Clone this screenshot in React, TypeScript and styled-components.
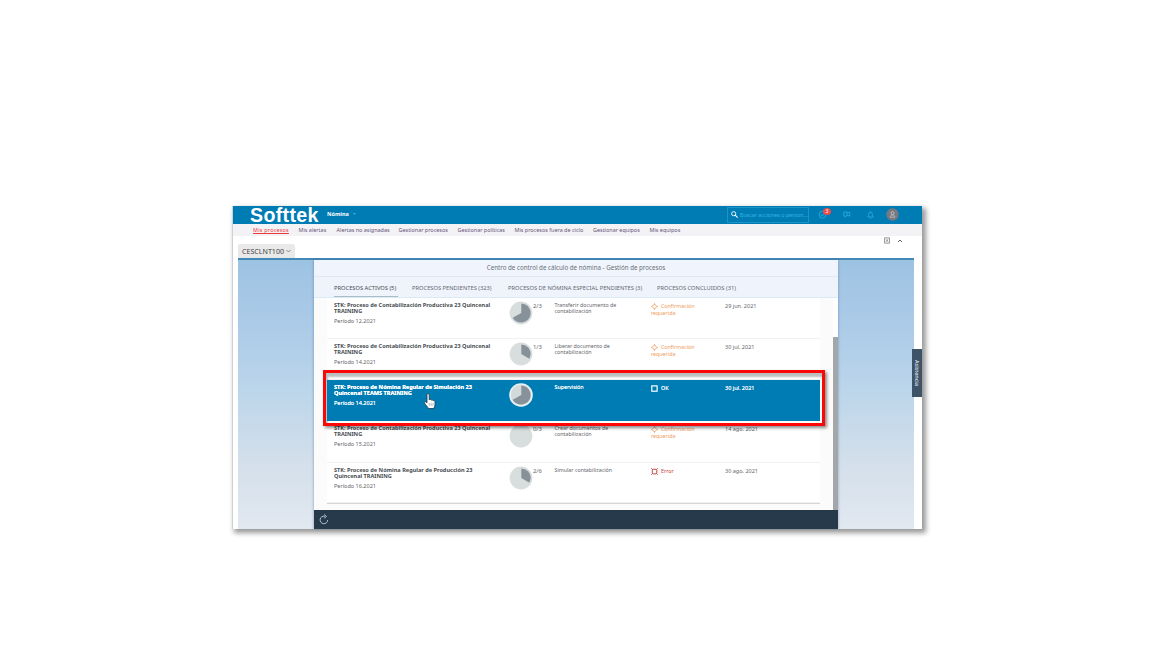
import React from "react";
import styled, { createGlobalStyle, css } from "styled-components";

const Global = createGlobalStyle`
  * { box-sizing: border-box; }
  html, body { margin: 0; background: #fff; }
  body { font-family: "Noto Sans", "Open Sans", sans-serif; }
`;

const Page = styled.main`
  height: 648px;
  padding: 206px 0 0 232px;
  overflow: hidden;
`;
const Window = styled.section`
  position: relative;
  width: 690px;
  height: 323px;
  background: #fff;
  border-left: 1px solid #cdd1d5;
  box-shadow: 3px 3px 5px 1px rgba(0, 0, 0, 0.4);
`;
const Header = styled.header`
  height: 18px;
  display: flex;
  align-items: center;
  padding-left: 17px;
  background: #007cb5;
  color: #fff;
`;
const Logo = styled.div`
  width: 77px;
  height: 22px;
  margin-top: -1px;
  font: bold 19.6px/22px "Liberation Sans", sans-serif;
  letter-spacing: 0.35px;
  white-space: nowrap;
`;
const Module = styled.div`
  width: 400px;
  display: flex;
  align-items: center;
  gap: 4px;
  font-size: 5.5px;
  font-weight: 700;
  line-height: 8px;
  margin-top: -2px;
`;
const Search = styled.div`
  width: 82px;
  height: 16px;
  display: flex;
  align-items: center;
  gap: 2px;
  padding: 0 0 1px 3px;
  border: 1px solid #1e93c6;
  color: #35b5e4;
  font-size: 5.3px;
  white-space: nowrap;
`;
const HeadIcons = styled.div`
  display: flex;
  align-items: center;
  margin-left: 9px;
  margin-top: -1px;
  color: #27b1e2;
`;
const IconCell = styled.div<{ $w: number }>`
  position: relative;
  width: ${(p) => p.$w}px;
  height: 16px;
  display: flex;
  align-items: center;
  svg { display: block; }
`;
const Badge = styled.span`
  position: absolute;
  left: 5px;
  top: 1px;
  width: 8px;
  height: 7px;
  border-radius: 50%;
  background: #ee4b4b;
  color: #fff;
  font-size: 5px;
  line-height: 7px;
  text-align: center;
`;
const Nav = styled.nav`
  height: 12px;
  display: flex;
  padding: 2px 0 0 20px;
  background: #f3f2f4;
`;
const NavItem = styled.a<{ $w: number; $active?: boolean }>`
  width: ${(p) => p.$w}px;
  font-size: 5.45px;
  line-height: 8px;
  letter-spacing: ${(p) => (p.$active ? 0.22 : 0)}px;
  white-space: nowrap;
  color: ${(p) => (p.$active ? "#f0373d" : "#67527a")};
  text-decoration: ${(p) => (p.$active ? "underline" : "none")};
`;
const Toolbar = styled.div`
  height: 22px;
  display: flex;
  justify-content: space-between;
  padding-left: 5px;
`;
const System = styled.div`
  align-self: flex-end;
  width: 57px;
  height: 14px;
  display: flex;
  align-items: center;
  gap: 2px;
  padding-left: 4px;
  border-radius: 2px 2px 0 0;
  background: #e9e9ea;
  color: #444;
  font-size: 7.1px;
  white-space: nowrap;
`;
const Tools = styled.div`
  display: flex;
  gap: 7px;
  padding: 1px 19px 0 0;
  color: #666;
`;
const Backdrop = styled.div`
  width: 676px;
  height: 271px;
  margin-left: 5px;
  display: flex;
  border-top: 2px solid #4389b8;
  background: linear-gradient(180deg, #9dc3e2 0%, #accbe8 25%, #bdd6ea 50%, #d3dfeb 75%, #e2e8f0 100%);
`;
const Panel = styled.div`
  width: 524px;
  margin-left: 76px;
  display: flex;
  flex-direction: column;
  background: #fbfbfc;
  box-shadow: -1px 0 2px rgba(40, 80, 120, 0.25), 1px 0 2px rgba(40, 80, 120, 0.2);
`;
const Title = styled.h1`
  height: 17px;
  margin: 0;
  background: #eff4fd;
  border-bottom: 1px solid #e0e8f2;
  color: #6a7077;
  font-size: 6.2px;
  font-weight: 400;
  line-height: 15px;
  text-align: center;
`;
const Tabs = styled.div`
  height: 21px;
  display: flex;
  padding-left: 20px;
  background: #eff3fc;
  border-bottom: 1px solid #daebf4;
`;
const Tab = styled.div<{ $w: number; $gap: number; $active?: boolean }>`
  width: ${(p) => p.$w}px;
  margin-right: ${(p) => p.$gap}px;
  height: 20px;
  font-size: 5.74px;
  line-height: 22px;
  white-space: nowrap;
  color: ${(p) => (p.$active ? "#454b51" : "#62696f")};
  border-bottom: ${(p) => (p.$active ? "1px solid #a9bcc8" : "0")};
`;
const Body = styled.div`
  flex: 1;
  display: flex;
  justify-content: space-between;
  padding-left: 13px;
`;
const List = styled.div`
  width: 493px;
  height: 206px;
  background: #fff;
  border-bottom: 1px solid #d3d5d6;
`;
const Scroll = styled.div`
  width: 5px;
  padding-top: 39px;
  background: #fff;
`;
const Thumb = styled.div`
  height: 100%;
  background: #a4a7aa;
`;
const Row = styled.div<{ $selected?: boolean; $h: number }>`
  position: relative;
  height: ${(p) => p.$h}px;
  display: flex;
  padding-left: 7px;
  border-bottom: 1px solid #f0f1f2;
  color: #5f656a;
  font-size: 5.3px;
  line-height: 6.3px;
  ${(p) =>
    p.$selected &&
    css`
      z-index: 2;
      background: #007cb5;
      border-bottom: 0;
      color: #fff;
      text-shadow: 0 0 0.5px #fff;
    `}
`;
const NameCell = styled.div`
  width: 175px;
  padding-top: 4px;
  white-space: pre;
`;
const Name = styled.div<{ $selected?: boolean }>`
  font-weight: 700;
  font-size: 5.58px;
  color: ${(p) => (p.$selected ? "#fff" : "#484d51")};
`;
const Period = styled.div`
  margin-top: 3px;
  font-size: 5.5px;
  line-height: 7px;
`;
const PieCell = styled.div`
  width: 45.5px;
  display: flex;
  padding-top: 5px;
  font-size: 5.9px;
  svg { display: block; margin-top: -2px; }
`;
const Step = styled.div`
  width: 96.5px;
  padding-top: 4px;
  white-space: pre;
`;
const Status = styled.div<{ $color: string }>`
  width: 74px;
  padding-top: 4px;
  color: ${(p) => p.$color};
  line-height: 7px;
  white-space: pre;
`;
const StatusLine = styled.div`
  display: flex;
  align-items: center;
  gap: 3px;
  height: 8px;
`;
const DateCell = styled.div`
  padding-top: 5px;
  font-size: 5.5px;
`;
const Footer = styled.footer`
  height: 19px;
  display: flex;
  align-items: center;
  padding-left: 5px;
  background: #263a4b;
`;
const Highlight = styled.div`
  position: absolute;
  left: 90px;
  top: 164px;
  width: 502px;
  height: 56px;
  z-index: 1;
  border: 3px solid #fb0707;
  box-shadow: 2px 2px 3px rgba(0, 0, 0, 0.45), inset 2px 4px 2px rgba(90, 105, 105, 0.42);
`;
const Cursor = styled.svg`
  position: absolute;
  left: 190px;
  top: 187px;
  z-index: 3;
`;
const Assist = styled.div`
  position: absolute;
  right: 0;
  top: 143px;
  width: 10px;
  height: 48px;
  display: flex;
  align-items: center;
  justify-content: center;
  background: #3d5368;
  color: #fff;
  font-size: 5.5px;
  writing-mode: vertical-rl;
`;

const Pie = ({ share, selected }: { share: number; selected?: boolean }) => {
  const a = share * Math.PI * 2;
  const r = 9.6;
  return (
    <svg width="24" height="24" viewBox="0 0 24 24">
      <circle cx="12" cy="12" r={selected ? 11.8 : 11.4} fill={selected ? "#eaf1f4" : "#d8dede"} />
      {selected && <circle cx="12" cy="12" r="10.2" fill="#d3dadc" />}
      {share > 0 && (
        <path
          d={`M12.3 12V${12 - r}A${r} ${r} 0 ${share > 0.5 ? 1 : 0} 1 ${12 + r * Math.sin(a)} ${12 - r * Math.cos(a)}Z`}
          fill="#87919a"
        />
      )}
    </svg>
  );
};

const StatusIcon = ({ kind }: { kind: string }) => (
  <svg width="7" height="7" viewBox="0 0 7 7" fill="none" stroke="currentColor">
    {kind === "confirm" && (
      <>
        <path d="M3.5 1 6 3.5 3.5 6 1 3.5Z" strokeWidth=".85" />
        <path d="M3.5 0v1.2M3.5 5.8V7M0 3.5h1.2M5.8 3.5H7" strokeWidth=".7" />
      </>
    )}
    {kind === "ok" && <rect x=".8" y=".9" width="5.3" height="5.3" strokeWidth="1.2" />}
    {kind === "error" && (
      <>
        <rect x="1.3" y="1.3" width="4.5" height="4.5" rx="1" strokeWidth="1" />
        <path d="M.2.2 1.6 1.6M6.8.2 5.4 1.6M.2 6.8 1.6 5.4M6.8 6.8 5.4 5.4" strokeWidth=".8" />
      </>
    )}
  </svg>
);

type Process = {
  name: string;
  period: string;
  share: number;
  count: string;
  step: string;
  status: "confirm" | "ok" | "error";
  date: string;
  h: number;
  selected?: boolean;
};

const CONTA = "STK: Proceso de Contabilización Productiva 23 Quincenal\nTRAINING";
const processes: Process[] = [
  { name: CONTA, period: "Período 12.2021", share: 2 / 3, count: "2/3", step: "Transferir documento de\ncontabilización", status: "confirm", date: "29 jun. 2021", h: 41 },
  { name: CONTA, period: "Período 14.2021", share: 1 / 3, count: "1/3", step: "Liberar documento de\ncontabilización", status: "confirm", date: "30 jul. 2021", h: 41 },
  { name: "STK: Proceso de Nómina Regular de Simulación 23\nQuincenal TEAMS TRAINING", period: "Período 14.2021", share: 2 / 3, count: "", step: "Supervisión", status: "ok", date: "30 jul. 2021", h: 41, selected: true },
  { name: CONTA, period: "Período 15.2021", share: 0, count: "0/3", step: "Crear documentos de\ncontabilización", status: "confirm", date: "14 ago. 2021", h: 42 },
  { name: "STK: Proceso de Nómina Regular de Producción 23\nQuincenal TRAINING", period: "Período 16.2021", share: 1 / 3, count: "2/6", step: "Simular contabilización", status: "error", date: "30 ago. 2021", h: 40 },
];

const statusColor = { confirm: "#ee9a5b", ok: "#fff", error: "#c93a35" };

const ProcessRow = ({ p }: { p: Process }) => (
  <Row $selected={p.selected} $h={p.h}>
    <NameCell>
      <Name $selected={p.selected}>{p.name}</Name>
      <Period>{p.period}</Period>
    </NameCell>
    <PieCell>
      <Pie share={p.share} selected={p.selected} />
      <span>{p.count}</span>
    </PieCell>
    <Step>{p.step}</Step>
    <Status $color={statusColor[p.status]}>
      <StatusLine>
        <StatusIcon kind={p.status} />
        {p.status === "confirm" ? "Confirmación" : p.status === "ok" ? "OK" : "Error"}
      </StatusLine>
      {p.status === "confirm" && "requerida"}
    </Status>
    <DateCell>{p.date}</DateCell>
  </Row>
);

export default function App() {
  return (
    <Page>
      <Global />
      <Window>
        <Header>
          <Logo>Softtek</Logo>
          <Module>
            Nómina
            <svg width="3" height="2" viewBox="0 0 3 2"><path d="M0 0h3L1.5 2Z" fill="#28b5e4" /></svg>
          </Module>
          <Search>
            <svg width="7" height="7" viewBox="0 0 7 7" fill="none" stroke="#fff"><circle cx="2.7" cy="2.7" r="2.1" strokeWidth=".9" /><path d="M4.2 4.2 6.6 6.6" strokeWidth="1.1" /></svg>
            Buscar acciones o person...
          </Search>
          <HeadIcons>
            <IconCell $w={25}>
              <svg width="9" height="9" viewBox="0 0 9 9" fill="none" stroke="currentColor" strokeWidth=".8"><circle cx="4.5" cy="4.7" r="3.4" /><path d="M2.8 4.7 4.2 6 6.5 3.5" /></svg>
              <Badge>3</Badge>
            </IconCell>
            <IconCell $w={24}>
              <svg width="8" height="7" viewBox="0 0 8 7" fill="none" stroke="currentColor" strokeWidth=".8"><path d="M4 1H.8v3.8h1v1.3L3.2 4.8H4" /><rect x="4" y="1.6" width="2.8" height="3.2" /></svg>
            </IconCell>
            <IconCell $w={19}>
              <svg width="7" height="8" viewBox="0 0 7 8" fill="none" stroke="currentColor" strokeWidth=".8"><path d="M.6 6h5.8L5.4 4.8V3.2a1.9 1.9 0 0 0-3.8 0v1.6ZM2.7 7.2h1.6M3.5.5v.8" /></svg>
            </IconCell>
            <IconCell $w={14}>
              <svg width="13" height="13" viewBox="0 0 13 13"><circle cx="6.5" cy="6.5" r="6.2" fill="#777980" /><circle cx="6.5" cy="5" r="1.5" fill="none" stroke="#c5c7ca" strokeWidth=".8" /><path d="M4.1 9.2c0-2.9 4.8-2.9 4.8 0Z" fill="none" stroke="#c5c7ca" strokeWidth=".8" /></svg>
            </IconCell>
          </HeadIcons>
        </Header>
        <Nav>
          <NavItem $w={45.5} $active>Mis procesos</NavItem>
          <NavItem $w={38}>Mis alertas</NavItem>
          <NavItem $w={62}>Alertas no asignadas</NavItem>
          <NavItem $w={59}>Gestionar procesos</NavItem>
          <NavItem $w={57}>Gestionar políticas</NavItem>
          <NavItem $w={78.5}>Mis procesos fuera de ciclo</NavItem>
          <NavItem $w={56.5}>Gestionar equipos</NavItem>
          <NavItem $w={40}>Mis equipos</NavItem>
        </Nav>
        <Toolbar>
          <System>
            CESCLNT100
            <svg width="5" height="4" viewBox="0 0 5 4" fill="none" stroke="#666" strokeWidth=".7"><path d="M.5 1 2.5 3 4.5 1" /></svg>
          </System>
          <Tools>
            <svg width="6" height="7" viewBox="0 0 6 7" fill="none" stroke="currentColor" strokeWidth=".7"><path d="M.4.9h5.2v5.2H.4ZM2 2.3l2 2.4M4 2.3 2 4.7" /></svg>
            <svg width="6" height="7" viewBox="0 0 6 7" fill="none" stroke="currentColor"><path d="M1 5 3 3 5 5" strokeWidth="1" /></svg>
          </Tools>
        </Toolbar>
        <Backdrop>
          <Panel>
            <Title>Centro de control de cálculo de nómina - Gestión de procesos</Title>
            <Tabs>
              <Tab $w={63.5} $gap={14.5} $active>PROCESOS ACTIVOS (5)</Tab>
              <Tab $w={81} $gap={15}>PROCESOS PENDIENTES (323)</Tab>
              <Tab $w={134} $gap={15}>PROCESOS DE NÓMINA ESPECIAL PENDIENTES (3)</Tab>
              <Tab $w={80} $gap={0}>PROCESOS CONCLUIDOS (31)</Tab>
            </Tabs>
            <Body>
              <List>{processes.map((p, i) => <ProcessRow key={i} p={p} />)}</List>
              <Scroll><Thumb /></Scroll>
            </Body>
            <Footer>
              <svg width="10" height="11" viewBox="0 0 10 11" fill="none" stroke="#a9c4d6" strokeWidth="1"><path d="M8.7 6A3.8 3.8 0 1 1 6 2.3M5.2.5 7.5 2.5 5.2 4.2" /></svg>
            </Footer>
          </Panel>
        </Backdrop>
        <Highlight />
        <Cursor width="14" height="18" viewBox="0 0 14 18">
          <path d="M4 1.7c0-1.4 2.2-1.4 2.2 0v5.2c.4-.9 2-.7 2 .3.5-.6 1.9-.4 1.9.6.6-.5 1.9-.2 1.9 1v3.1c0 1.5-1.1 2.2-1.1 3.6H5.2c0-1.3-2.4-3-3.7-5.4-.8-1.5.9-2.1 2.5-.2Z" fill="#fff" stroke="#20394a" strokeWidth=".8" />
          <path d="M6.3 10v2.8M8.2 10v2.8M10 10v2.8" stroke="#637783" strokeWidth=".5" />
        </Cursor>
        <Assist>Asistencia</Assist>
      </Window>
    </Page>
  );
}
